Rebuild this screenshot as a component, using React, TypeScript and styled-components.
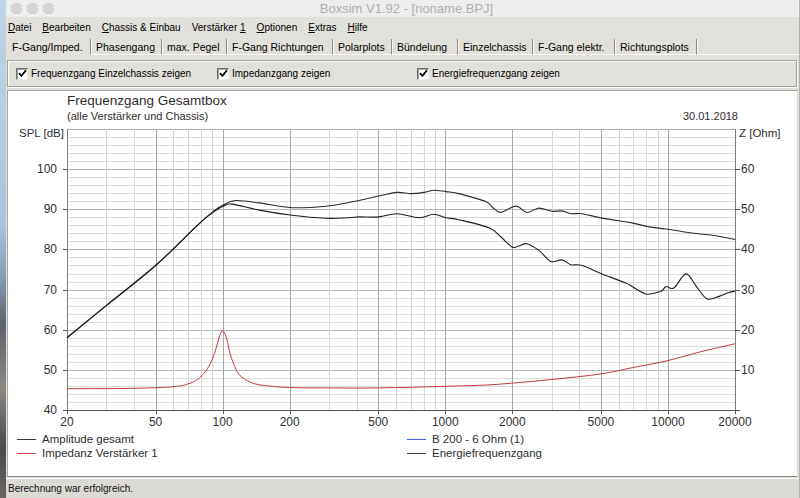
import React from 'react';
import styled, { createGlobalStyle } from 'styled-components';

const GlobalStyle = createGlobalStyle`
  html, body {
    margin: 0;
    padding: 0;
  }
  body {
    font-family: "Liberation Sans", Arial, sans-serif;
    background: #e2e0db;
  }
`;

type Curve = [number, number][];

const MENU: { text: string; hot: number }[] = [
  { text: 'Datei', hot: 0 },
  { text: 'Bearbeiten', hot: 0 },
  { text: 'Chassis & Einbau', hot: 0 },
  { text: 'Verstärker 1', hot: 11 },
  { text: 'Optionen', hot: 0 },
  { text: 'Extras', hot: 0 },
  { text: 'Hilfe', hot: 0 },
];

const TABS: [string, number][] = [
  ['F-Gang/Imped.', 83],
  ['Phasengang', 71],
  ['max. Pegel', 65],
  ['F-Gang Richtungen', 106],
  ['Polarplots', 59],
  ['Bündelung', 66],
  ['Einzelchassis', 75],
  ['F-Gang elektr.', 82],
  ['Richtungsplots', 82],
];

const OPTIONS = [
  'Frequenzgang Einzelchassis zeigen',
  'Impedanzgang zeigen',
  'Energiefrequenzgang zeigen',
];

// Energiefrequenzgang (upper black)
const energy: Curve = [
  [20, 58], [30, 66], [50, 76], [77, 86], [91, 89.5], [100, 91], [114, 92.2], [146, 91.6],
  [205, 90.4], [291, 90.75], [369, 91.7], [504, 93.3], [606, 94.2], [700, 93.9], [802, 94.2],
  [889, 94.75], [1007, 94.4], [1151, 93.9], [1374, 92.7], [1538, 91.8], [1653, 90.2],
  [1778, 89.25], [2076, 90.8], [2326, 89.2], [2632, 90.3], [3013, 89.5], [3342, 89.6],
  [3666, 88.9], [4111, 88.9], [5052, 87.8], [6888, 86.6], [8210, 85.6], [9790, 85.1],
  [12800, 84.1], [16400, 83.4], [20000, 82.5],
];

// Amplitude gesamt (lower black)
const amplitude: Curve = [
  [20, 58], [30, 66], [50, 76], [77, 86], [91, 89.3], [100, 90.7], [110, 91.3], [146, 89.8],
  [205, 88.5], [291, 87.75], [369, 87.9], [410, 88.1], [504, 88.1], [606, 88.9], [762, 87.9],
  [889, 88.75], [1007, 87.9], [1151, 87.4], [1570, 85.4], [1778, 83.1], [1993, 80.6],
  [2150, 80.9], [2326, 81.4], [2632, 79.75], [2980, 77], [3342, 77.4], [3666, 76.2],
  [4111, 76], [5052, 73.9], [6470, 71.6], [7960, 68.9], [9300, 69.6], [9790, 70.75],
  [10630, 70.4], [12040, 73.9], [13340, 71], [14960, 67.7], [16940, 68.3], [18790, 69.3],
  [20000, 69.6],
];

// Impedanz Verstärker 1 in Ohm (right axis)
const impedance: Curve = [
  [20, 5.3], [40, 5.4], [60, 5.8], [70, 6.5], [77, 7.6], [82, 9], [88, 11.5], [93, 15],
  [97, 18.5], [100, 19.7], [104, 18], [108, 14], [113, 11], [118, 9], [127, 7.5], [140, 6.5],
  [160, 6], [200, 5.6], [300, 5.5], [500, 5.5], [1000, 5.9], [1500, 6.2], [2000, 6.7],
  [3000, 7.6], [5000, 9], [7000, 10.6], [10000, 12.3], [14000, 14.5], [20000, 16.5],
];

const W = 789;
const H = 308;
const L = 60;
const R = 728;
const T = 5;
const B = 286;

const fx = (f: number) => L + (Math.log10(f / 20) / 3) * (R - L);
const fy = (db: number) => B - ((db - 40) / 70) * (B - T);
const fz = (ohm: number) => B - (ohm / 70) * (B - T);
const px = (v: number) => Math.round(v) + 0.5;

const MAJOR_F = [20, 50, 100, 200, 500, 1000, 2000, 5000, 10000, 20000];
const MINOR_F: number[] = [];
[10, 100, 1000, 10000].forEach(d => {
  for (let m = 1; m <= 9; m++) {
    const f = m * d;
    if (f >= 20 && f <= 20000 && !MAJOR_F.includes(f)) MINOR_F.push(f);
  }
});
const DB_LINES: number[] = [];
for (let db = 40; db <= 110; db += 2) DB_LINES.push(db);

// catmull-rom through the measured points, so the traces don't look like polylines
const toPath = (c: Curve, map: (v: number) => number) => {
  const p = c.map(([f, v]) => [fx(f), map(v)]);
  let d = `M${p[0][0].toFixed(1)},${p[0][1].toFixed(1)}`;
  for (let i = 0; i < p.length - 1; i++) {
    const p0 = p[i - 1] || p[i];
    const p1 = p[i];
    const p2 = p[i + 1];
    const p3 = p[i + 2] || p2;
    const c1x = p1[0] + (p2[0] - p0[0]) / 6;
    const c1y = p1[1] + (p2[1] - p0[1]) / 6;
    const c2x = p2[0] - (p3[0] - p1[0]) / 6;
    const c2y = p2[1] - (p3[1] - p1[1]) / 6;
    d += ` C${c1x.toFixed(1)},${c1y.toFixed(1)} ${c2x.toFixed(1)},${c2y.toFixed(1)} ${p2[0].toFixed(1)},${p2[1].toFixed(1)}`;
  }
  return d;
};

const Chart = () => (
  <PlotSvg width={W} height={H} viewBox={`0 0 ${W} ${H}`}>
    <g shapeRendering="crispEdges">
      {DB_LINES.map(db => (
        <line
          key={db}
          x1={L}
          x2={R}
          y1={px(fy(db))}
          y2={px(fy(db))}
          stroke={db % 10 === 0 ? '#b4b4b4' : '#dcdcdc'}
        />
      ))}
      {MINOR_F.map(f => (
        <line key={f} x1={px(fx(f))} x2={px(fx(f))} y1={T} y2={B} stroke="#d4d4d4" />
      ))}
      {MAJOR_F.map(f => (
        <line key={f} x1={px(fx(f))} x2={px(fx(f))} y1={T} y2={B} stroke="#a6a6a6" />
      ))}
      <line x1={px(L)} x2={px(L)} y1={T} y2={B + 4} stroke="#7a7a7a" />
      <line x1={px(R)} x2={px(R)} y1={T} y2={B + 4} stroke="#7a7a7a" />
      <line x1={L} x2={R + 1} y1={px(B)} y2={px(B)} stroke="#555" />
      {[40, 50, 60, 70, 80, 90, 100].map(db => (
        <g key={db}>
          <line x1={L - 4} x2={L} y1={px(fy(db))} y2={px(fy(db))} stroke="#555" />
          <line x1={R} x2={R + 5} y1={px(fy(db))} y2={px(fy(db))} stroke="#555" />
        </g>
      ))}
      {MAJOR_F.map(f => (
        <line key={f} x1={px(fx(f))} x2={px(fx(f))} y1={B} y2={B + 4} stroke="#555" />
      ))}
    </g>

    <path d={toPath(impedance, fz)} fill="none" stroke="#c0383c" strokeWidth="1" />
    <path d={toPath(energy, fy)} fill="none" stroke="#2c2c2c" strokeWidth="1.1" />
    <path d={toPath(amplitude, fy)} fill="none" stroke="#1e1e1e" strokeWidth="1.1" />

    <AxisTitle x={12} y={13}>SPL [dB]</AxisTitle>
    <AxisTitle x={732} y={13}>Z [Ohm]</AxisTitle>
    {[40, 50, 60, 70, 80, 90, 100].map(db => (
      <AxisLabel key={db} x={50} y={fy(db) + 4} textAnchor="end">{db}</AxisLabel>
    ))}
    {[10, 20, 30, 40, 50, 60].map(z => (
      <AxisLabel key={z} x={734} y={fz(z) + 4}>{z}</AxisLabel>
    ))}
    {MAJOR_F.map(f => (
      <AxisLabel key={f} x={fx(f)} y={302} textAnchor="middle">{f}</AxisLabel>
    ))}
  </PlotSvg>
);

const Check = () => (
  <CheckBox>
    <svg width="9" height="9" viewBox="0 0 9 9">
      <path d="M1 4.2 L3.4 6.9 L8 1.3" fill="none" stroke="#000" strokeWidth="1.8" />
    </svg>
  </CheckBox>
);

const App = () => (
  <>
    <GlobalStyle />
    <Screen>
      <DesktopStrip />
      <Window>
        <TitleBar>
          <Lights>
            <Light />
            <Light />
            <Light />
          </Lights>
          <WindowTitle>Boxsim V1.92 - [noname.BPJ]</WindowTitle>
        </TitleBar>

        <MenuBar>
          {MENU.map(m => (
            <MenuItem key={m.text}>
              {m.text.slice(0, m.hot)}
              <u>{m.text[m.hot]}</u>
              {m.text.slice(m.hot + 1)}
            </MenuItem>
          ))}
        </MenuBar>

        <TabStrip>
          {TABS.map(([label, w], i) => (
            <Tab key={label} $w={w} $active={i === 0}>{label}</Tab>
          ))}
          <TabFill />
        </TabStrip>

        <TabPanel>
          <CheckGroup>
            {OPTIONS.map(o => (
              <CheckRow key={o}>
                <Check />
                {o}
              </CheckRow>
            ))}
          </CheckGroup>

          <ChartPanel>
            <ChartHeader>
              <div>
                <ChartTitle>Frequenzgang Gesamtbox</ChartTitle>
                <ChartSub>(alle Verstärker und Chassis)</ChartSub>
              </div>
              <ChartSub>30.01.2018</ChartSub>
            </ChartHeader>
            <Chart />
            <Legend>
              <LegendItem><Swatch $color="#3a3a3a" />Amplitude gesamt</LegendItem>
              <LegendItem><Swatch $color="#4a5cf0" />B 200 - 6 Ohm (1)</LegendItem>
              <LegendItem><Swatch $color="#d04a58" />Impedanz Verstärker 1</LegendItem>
              <LegendItem><Swatch $color="#3a3a3a" />Energiefrequenzgang</LegendItem>
            </Legend>
          </ChartPanel>
        </TabPanel>

        <StatusBar>Berechnung war erfolgreich.</StatusBar>
      </Window>
    </Screen>
  </>
);

export default App;

const Screen = styled.div`
  display: flex;
  width: 800px;
  height: 498px;
  overflow: hidden;
`;

const DesktopStrip = styled.div`
  width: 6px;
  flex-shrink: 0;
  background: linear-gradient(
    to bottom,
    #c3d5e6 0%,
    #a9c2da 45%,
    #8aa1b8 55%,
    #5d636c 65%,
    #8b8580 78%,
    #4d4b4e 90%,
    #6b6462 100%
  );
`;

const Window = styled.div`
  flex: 1;
  display: flex;
  flex-direction: column;
  background: #e2e0db;
  border-right: 1px solid #b5b3ae;
`;

const TitleBar = styled.div`
  height: 17px;
  flex-shrink: 0;
  display: flex;
  align-items: center;
  background: #ededed;
`;

const Lights = styled.div`
  display: flex;
  gap: 5px;
  padding-left: 5px;
`;

const Light = styled.div`
  width: 11px;
  height: 11px;
  border-radius: 50%;
  background: #d5d5d5;
  box-shadow: inset 0 0 0 0.5px #c6c6c6;
`;

const WindowTitle = styled.div`
  flex: 1;
  text-align: center;
  margin-left: -40px;
  font-size: 13px;
  color: #b0b0b0;
`;

const MenuBar = styled.div`
  height: 20px;
  flex-shrink: 0;
  display: flex;
  align-items: center;
  gap: 11px;
  padding-left: 2px;
  font-size: 10px;
  color: #000;
`;

const MenuItem = styled.span`
  white-space: nowrap;
  u {
    text-decoration: underline;
    text-underline-offset: 1px;
  }
`;

const TabStrip = styled.div`
  height: 18px;
  flex-shrink: 0;
  display: flex;
  align-items: flex-end;
  padding-left: 2px;
  font-size: 10.5px;
  color: #000;
`;

const Tab = styled.div<{ $w: number; $active?: boolean }>`
  box-sizing: border-box;
  width: ${p => p.$w}px;
  height: 16px;
  padding-left: ${p => (p.$active ? 4 : 5)}px;
  display: flex;
  align-items: center;
  white-space: nowrap;
  border-right: 1px solid #8c8a86;
  box-shadow: 1px 0 0 #fbfbfb;
  border-bottom: 1px solid ${p => (p.$active ? 'transparent' : '#fbfbfb')};
`;

const TabFill = styled.div`
  flex: 1;
  height: 16px;
  box-sizing: border-box;
  border-bottom: 1px solid #fbfbfb;
`;

const TabPanel = styled.div`
  flex: 1;
  display: flex;
  flex-direction: column;
  padding: 5px 2px 1px 1px;
  min-height: 0;
`;

const CheckGroup = styled.div`
  box-sizing: border-box;
  height: 27px;
  flex-shrink: 0;
  display: grid;
  grid-template-columns: 201px 200px 1fr;
  align-items: center;
  padding-left: 8px;
  border: 1px solid #a2a09c;
  box-shadow: inset 1px 1px 0 #fbfbfb, 1px 1px 0 #fbfbfb;
  margin-bottom: 3px;
  font-size: 10px;
  color: #000;
`;

const CheckRow = styled.label`
  display: flex;
  align-items: center;
  gap: 3px;
  white-space: nowrap;
`;

const CheckBox = styled.span`
  box-sizing: border-box;
  width: 12px;
  height: 12px;
  display: flex;
  align-items: center;
  justify-content: center;
  background: #fff;
  border: 1px solid;
  border-color: #6f6f6f #e8e8e8 #e8e8e8 #6f6f6f;
  box-shadow: inset 1px 1px 0 #a0a0a0;
`;

const ChartPanel = styled.div`
  flex: 1;
  display: flex;
  flex-direction: column;
  background: #fff;
  border-top: 1px solid #a8a6a2;
  border-left: 1px solid #a8a6a2;
  border-bottom: 1px solid #8a8884;
  padding-top: 2px;
  color: #2e2e2e;
`;

const ChartHeader = styled.div`
  display: flex;
  justify-content: space-between;
  align-items: flex-end;
  padding: 0 59px 0 59px;
  height: 31px;
`;

const ChartTitle = styled.div`
  font-size: 13.5px;
  line-height: 16px;
`;

const ChartSub = styled.div`
  font-size: 11px;
  line-height: 15px;
`;

const PlotSvg = styled.svg`
  display: block;
  flex-shrink: 0;
  margin-left: -1px;
`;

const AxisLabel = styled.text`
  font-family: "Liberation Sans", Arial, sans-serif;
  font-size: 12px;
  fill: #303030;
`;

const AxisTitle = styled.text`
  font-family: "Liberation Sans", Arial, sans-serif;
  font-size: 11.5px;
  fill: #303030;
`;

const Legend = styled.div`
  display: grid;
  grid-template-columns: 390px 1fr;
  grid-auto-rows: 14px;
  padding-left: 9px;
  font-size: 11.5px;
  color: #2e2e2e;
`;

const LegendItem = styled.div`
  display: flex;
  align-items: center;
  gap: 6px;
  white-space: nowrap;
`;

const Swatch = styled.span<{ $color: string }>`
  width: 19px;
  height: 1px;
  background: ${p => p.$color};
`;

const StatusBar = styled.div`
  height: 19px;
  flex-shrink: 0;
  display: flex;
  align-items: center;
  padding-left: 2px;
  border-top: 1px solid #fbfbfb;
  font-size: 10px;
  color: #111;
  background: #dcdad5;
`;
